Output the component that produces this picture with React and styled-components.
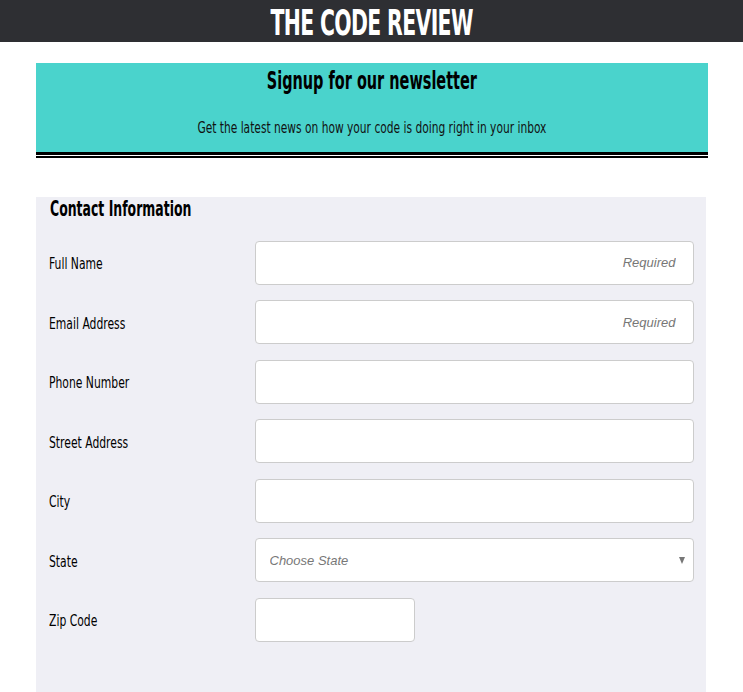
import React from "react";
import styled, { createGlobalStyle } from "styled-components";

const Global = createGlobalStyle`
  body {
    margin: 0;
    background: #fff;
    font-family: "DejaVu Sans Condensed", "Liberation Sans", sans-serif;
  }
`;

const Header = styled.header`
  height: 42px;
  background: #2e2f33;
  display: flex;
  justify-content: center;
  align-items: center;
`;

const Title = styled.h1`
  margin: 2px 0 0;
  color: #fff;
  font-size: 36px;
  font-weight: bold;
  letter-spacing: -1px;
  transform: scaleX(0.63);
`;

const Main = styled.main`
  width: 672px;
  margin: 21px auto 0;
`;

const Newsletter = styled.section`
  height: 89px;
  background: #4ad3cc;
  border-bottom: 3px solid #000;
  box-shadow: 0 1px 0 #fff, 0 3px 0 #000;
  display: flex;
  flex-direction: column;
  align-items: center;
`;

const NewsTitle = styled.h2`
  margin: 4px 0 0;
  font-size: 24px;
  font-weight: bold;
  color: #000;
  transform: scaleX(0.67);
`;

const NewsText = styled.p`
  margin: 24px 0 0;
  font-size: 15px;
  color: #111;
  transform: scaleX(0.79);
`;

const Panel = styled.form`
  width: 670px;
  margin-top: 42px;
  background: #efeff5;
  padding: 0 12px 50px 13px;
  box-sizing: border-box;
  display: flex;
  flex-direction: column;
  gap: 15.5px;
`;

const PanelTitle = styled.h3`
  margin: 0 0 0 1px;
  height: 28px;
  font-size: 21px;
  font-weight: bold;
  color: #000;
  transform: scaleX(0.66);
  transform-origin: left center;
`;

const Row = styled.div`
  display: flex;
  align-items: center;
`;

const Label = styled.label`
  width: 206px;
  padding-top: 3px;
  font-size: 15px;
  color: #000;
  transform: scaleX(0.8);
  transform-origin: left center;
`;

const Input = styled.input`
  box-sizing: border-box;
  width: ${p => p.$w || 439}px;
  height: 44px;
  border: 1px solid #ccc;
  border-radius: 4px;
  background: #fff;
  padding: 0 17px;
  font-family: "Liberation Sans", sans-serif;
  font-size: 13px;
  text-align: right;
  outline: none;
  &::placeholder {
    color: #777;
    font-style: italic;
  }
`;

const SelectWrap = styled.div`
  position: relative;
  width: 439px;
`;

const Select = styled.select`
  box-sizing: border-box;
  width: 100%;
  height: 44px;
  border: 1px solid #ccc;
  border-radius: 4px;
  background: #fff;
  padding: 0 14px;
  appearance: none;
  font-family: "Liberation Sans", sans-serif;
  font-size: 13px;
  font-style: italic;
  color: #777;
  outline: none;
`;

const Arrow = styled.span`
  position: absolute;
  right: 9px;
  top: 19px;
  width: 0;
  height: 0;
  border-left: 3.5px solid transparent;
  border-right: 3.5px solid transparent;
  border-top: 7px solid #777;
  pointer-events: none;
`;

const fields = [
  { label: "Full Name", placeholder: "Required" },
  { label: "Email Address", placeholder: "Required" },
  { label: "Phone Number" },
  { label: "Street Address" },
  { label: "City" },
];

export default function App() {
  return (
    <>
      <Global />
      <Header>
        <Title>THE CODE REVIEW</Title>
      </Header>
      <Main>
        <Newsletter>
          <NewsTitle>Signup for our newsletter</NewsTitle>
          <NewsText>Get the latest news on how your code is doing right in your inbox</NewsText>
        </Newsletter>
        <Panel>
          <PanelTitle>Contact Information</PanelTitle>
          {fields.map(f => (
            <Row key={f.label}>
              <Label>{f.label}</Label>
              <Input placeholder={f.placeholder} />
            </Row>
          ))}
          <Row>
            <Label>State</Label>
            <SelectWrap>
              <Select defaultValue="">
                <option value="" disabled>Choose State</option>
              </Select>
              <Arrow />
            </SelectWrap>
          </Row>
          <Row>
            <Label>Zip Code</Label>
            <Input $w={160} />
          </Row>
        </Panel>
      </Main>
    </>
  );
}
